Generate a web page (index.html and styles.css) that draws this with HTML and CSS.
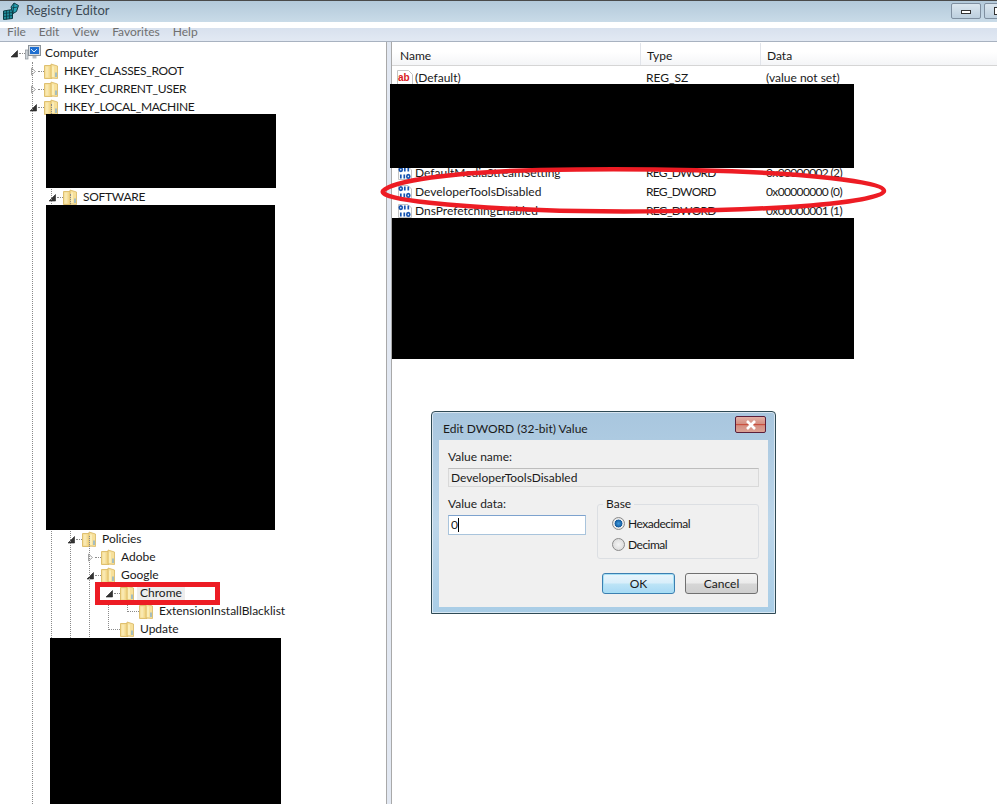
FILE: index.html
```html
<!DOCTYPE html>
<html lang="en">
<head>
<meta charset="utf-8">
<title>Registry Editor</title>
<link rel="stylesheet" href="styles.css">
</head>
<body>
<svg class="defs" width="0" height="0" aria-hidden="true">
  <symbol id="folder" viewBox="0 0 14 16">
    <path d="M0.500 2.500h7.500v13h-7.500z" fill="#f4da8e" stroke="#dfc070"/>
    <path d="M1.500 3.500h3v11h-3z" fill="#f9e8b0"/>
    <path d="M7 1l6.500 2v12.500L7 15z" fill="#f7e09a" stroke="#d8b660" stroke-width=".8"/>
    <path d="M9 3.500v10.500" stroke="#fbeeb9" stroke-width="2"/>
    <path d="M12 9.500v4.500" stroke="#6fa7d8" stroke-width="1.200"/>
  </symbol>
  <symbol id="arrow-open" viewBox="0 0 9 9">
    <path d="M1 8h6.500V1.500z" fill="#333" stroke="#222" stroke-width=".6"/>
  </symbol>
  <symbol id="arrow-closed" viewBox="0 0 9 9">
    <path d="M2.500 1v7l4-3.500z" fill="#fff" stroke="#a6a6a6" stroke-width="1"/>
  </symbol>
  <symbol id="bin" viewBox="0 0 16 16">
    <path d="M1.500 1.500h9.500l3.500 3.500v9.500h-13z" fill="#fff" stroke="#c4c4c4"/>
    <g fill="none" stroke="#1553b0" stroke-width="1.700">
      <ellipse cx="3.800" cy="4.600" rx="1.500" ry="1.700"/>
      <path d="M7.800 2.600v4M11.300 2.600v4M3.800 9.400v4M7.300 9.400v4"/>
      <ellipse cx="11.300" cy="11.400" rx="1.500" ry="1.700"/>
    </g>
  </symbol>
</svg>

<div class="window">
  <header class="titlebar">
    <svg class="app-icon" viewBox="0 0 18 18" width="18" height="18" aria-hidden="true">
      <path d="M1.500 9l9-1.500v9l-9 1z" fill="#1f8d9c" stroke="#0b3a44"/>
      <path d="M4.500 8.500v9M7.500 8v9M1.500 11.500l9-1M1.500 14.500l9-1" stroke="#0b3a44" stroke-width=".8"/>
      <path d="M9 5l3-4 4.500 2.500-2 6-3.500 2z" fill="#27a3b5" stroke="#0b3a44"/>
      <path d="M12 1.500l-1 10M9.500 6l6-1" stroke="#0b3a44" stroke-width=".8"/>
    </svg>
    <span class="title-text">Registry Editor</span>
    <div class="window-buttons">
      <div class="win-btn"><span class="min-glyph"></span></div>
      <div class="win-btn"><span class="max-glyph"></span></div>
    </div>
  </header>

  <nav class="menubar">
    <span>File</span><span>Edit</span><span>View</span><span>Favorites</span><span>Help</span>
  </nav>

  <div class="panes">
    <section class="tree">
      <div class="row l0">
        <svg class="exp"><use href="#arrow-open"/></svg><i class="dash"></i>
        <svg class="computer" viewBox="0 0 16 16" aria-hidden="true">
          <rect x="3.500" y="0.500" width="12" height="10" fill="#d8dde2" stroke="#8b9299"/>
          <rect x="5" y="2" width="9" height="7" fill="#1f6fd0"/>
          <path d="M6 4l3 3 3-3" stroke="#cfe6ff" stroke-width="1" fill="none"/>
          <path d="M7.500 11h4v2.500h-4z" fill="#b7bcc2"/>
          <rect x="0.500" y="5" width="2.500" height="9" fill="#cfd4d9" stroke="#8b9299" stroke-width=".7"/>
        </svg>
        <span class="label">Computer</span>
      </div>
      <div class="row l1"><svg class="exp"><use href="#arrow-closed"/></svg><i class="dash"></i><svg class="fld"><use href="#folder"/></svg><span class="label caps">HKEY_CLASSES_ROOT</span></div>
      <div class="row l1"><svg class="exp"><use href="#arrow-closed"/></svg><i class="dash"></i><svg class="fld"><use href="#folder"/></svg><span class="label caps">HKEY_CURRENT_USER</span></div>
      <div class="row l1"><svg class="exp"><use href="#arrow-open"/></svg><i class="dash"></i><svg class="fld"><use href="#folder"/></svg><span class="label caps">HKEY_LOCAL_MACHINE</span></div>
      <div class="gap-a"></div>
      <div class="row l2"><svg class="exp"><use href="#arrow-open"/></svg><i class="dash"></i><svg class="fld"><use href="#folder"/></svg><span class="label caps">SOFTWARE</span></div>
      <div class="gap-b"></div>
      <div class="row l3"><svg class="exp"><use href="#arrow-open"/></svg><i class="dash"></i><svg class="fld"><use href="#folder"/></svg><span class="label">Policies</span></div>
      <div class="row l4"><svg class="exp"><use href="#arrow-closed"/></svg><i class="dash"></i><svg class="fld"><use href="#folder"/></svg><span class="label">Adobe</span></div>
      <div class="row l4"><svg class="exp"><use href="#arrow-open"/></svg><i class="dash"></i><svg class="fld"><use href="#folder"/></svg><span class="label">Google</span></div>
      <div class="row l5"><svg class="exp"><use href="#arrow-open"/></svg><i class="dash"></i><svg class="fld"><use href="#folder"/></svg><span class="label selected">Chrome</span></div>
      <div class="row l6"><i class="blank"></i><i class="dash long"></i><svg class="fld"><use href="#folder"/></svg><span class="label">ExtensionInstallBlacklist</span></div>
      <div class="row l5"><i class="blank"></i><i class="dash long"></i><svg class="fld"><use href="#folder"/></svg><span class="label">Update</span></div>
      <i class="vline v2"></i><i class="vline v3"></i><i class="vline v4"></i><i class="vline v5"></i><i class="vline v6"></i><i class="vline v7"></i>
    </section>

    <div class="splitter"></div>

    <section class="list">
      <div class="list-head">
        <div class="col-name">Name</div>
        <div class="col-type">Type</div>
        <div class="col-data">Data</div>
      </div>
      <div class="list-row">
        <div class="col-name">
          <svg class="val-icon" viewBox="0 0 16 16" aria-hidden="true">
            <path d="M0.500 0.500h11l4 4v10h-15z" fill="#fff" stroke="#c4c4c4"/>
            <text x="1" y="10.500" class="ab-text">ab</text>
          </svg>(Default)</div>
        <div class="col-type">REG_SZ</div>
        <div class="col-data">(value not set)</div>
      </div>
      <div class="list-gap"></div>
      <div class="list-row">
        <div class="col-name"><svg class="val-icon"><use href="#bin"/></svg>DefaultMediaStreamSetting</div>
        <div class="col-type dw">REG_DWORD</div>
        <div class="col-data num">0x00000002 (2)</div>
      </div>
      <div class="list-row">
        <div class="col-name"><svg class="val-icon"><use href="#bin"/></svg>DeveloperToolsDisabled</div>
        <div class="col-type dw">REG_DWORD</div>
        <div class="col-data num">0x00000000 (0)</div>
      </div>
      <div class="list-row">
        <div class="col-name"><svg class="val-icon"><use href="#bin"/></svg>DnsPrefetchingEnabled</div>
        <div class="col-type dw">REG_DWORD</div>
        <div class="col-data num">0x00000001 (1)</div>
      </div>
    </section>
  </div>

  <div class="redact r1"></div>
  <div class="redact r2"></div>
  <div class="redact r3"></div>
  <div class="redact r4"></div>
  <div class="redact r5"></div>

  <div class="red-box"></div>
  <svg class="red-ellipse" viewBox="0 0 997 804" aria-hidden="true">
    <path d="M383 191C392 181 450 172 540 170C640 168 760 170 830 178C865 182 884 186 884 191C884 197 850 203 790 207C720 211 620 213 540 210C460 207 378 200 383 191Z" fill="none" stroke="#ed1c24" stroke-width="4.500"/>
  </svg>

  <div class="dialog">
    <div class="dialog-title">
      <span>Edit DWORD (32-bit) Value</span>
      <div class="close-btn"><svg viewBox="0 0 12 10" width="12" height="10" aria-hidden="true"><path d="M2 1l8 8M10 1L2 9" stroke="#fff" stroke-width="2.600"/></svg></div>
    </div>
    <div class="dialog-body">
      <div class="field-label">Value name:</div>
      <div class="readonly">DeveloperToolsDisabled</div>
      <div class="dialog-mid">
        <div class="data-col">
          <div class="field-label">Value data:</div>
          <div class="text-input"><span>0</span><i class="caret"></i></div>
        </div>
        <fieldset class="base">
          <legend>Base</legend>
          <div class="radio-row"><i class="radio checked"></i><span>Hexadecimal</span></div>
          <div class="radio-row"><i class="radio"></i><span>Decimal</span></div>
        </fieldset>
      </div>
      <div class="dialog-buttons">
        <div class="btn default">OK</div>
        <div class="btn">Cancel</div>
      </div>
    </div>
  </div>
</div>
</body>
</html>
```

FILE: styles.css
```css
* { box-sizing: border-box; }
html, body { margin: 0; padding: 0; background: #fff; }
body { width: 997px; height: 804px; overflow: hidden; font: 12px/16px Lato, "Liberation Sans", sans-serif; color: #1a1a1a; }
.defs { position: absolute; }
.ab-text { font: bold 10px "Liberation Sans", sans-serif; fill: #d8201c; }

.window { position: relative; width: 997px; height: 804px; display: flex; flex-direction: column; }

.titlebar { height: 22px; flex: none; display: flex; align-items: center; padding-left: 2px; padding-bottom: 2px; background: linear-gradient(#b3c9da, #c9dbe8); border-top: 1px solid #4a4a4a; }
.app-icon { flex: none; margin-right: 6px; }
.title-text { color: #3c4a55; font-size: 13px; margin-top: -1px; }
.window-buttons { margin-left: auto; display: flex; gap: 3px; align-self: flex-start; padding-top: 2px; margin-right: -17px; }
.win-btn { width: 30px; height: 16px; border: 1px solid #7f8fa0; border-radius: 2px; background: linear-gradient(#dbe6ef, #bccfde); display: flex; align-items: center; justify-content: center; }
.min-glyph { width: 10px; height: 4px; border: 1px solid #333; background: #fff; margin-top: 2px; }
.max-glyph { width: 10px; height: 8px; border: 1px solid #333; background: #fff; }

.menubar { height: 20px; flex: none; display: flex; gap: 13px; padding: 3px 0 0 7px; line-height: 13px; color: #6f6f6f; background: linear-gradient(#fff 0, #fff 6px, #d8e1ee 6px, #e2e9f3 100%); border-bottom: 1px solid #a8b2c0; }

.panes { flex: 1; display: flex; min-height: 0; }
.tree { position: relative; width: 387px; flex: none; padding-top: 2px; background: #fff; border-right: 1px solid #a9a9a9; }
.splitter { width: 4px; flex: none; background: #e2e8f2; }
.list { flex: 1; padding-top: 1px; background: #fff; border-left: 1px solid #a9a9a9; }

.row { height: 18px; display: flex; align-items: center; white-space: nowrap; }
.l0 { padding-left: 10px; }
.l1 { padding-left: 29px; }
.l2 { padding-left: 48px; }
.l3 { padding-left: 67px; }
.l4 { padding-left: 86px; }
.l5 { padding-left: 105px; }
.l6 { padding-left: 124px; }
.exp { display: block; width: 9px; height: 9px; flex: none; }
.blank { width: 3px; flex: none; }
.dash { width: 6px; height: 1px; flex: none; border-top: 1px dotted #8a8a8a; }
.dash.long { width: 12px; }
.fld { width: 14px; height: 16px; flex: none; margin-right: 3px; }
.computer { width: 16px; height: 16px; flex: none; margin-right: 1px; }
.label { padding: 0 3px 1px; line-height: 14px; }
.caps { letter-spacing: -.3px; }
.selected { background: #ededed; }
.gap-a { height: 72px; }
.gap-b { height: 324px; }

.vline { position: absolute; width: 1px; border-left: 1px dotted #8a8a8a; }
.v2 { left: 32px; top: 20px; height: 742px; }
.v3 { left: 51px; top: 62px; height: 700px; }
.v4 { left: 70px; top: 152px; height: 610px; }
.v5 { left: 89px; top: 494px; height: 101px; }
.v6 { left: 108px; top: 558px; height: 30px; }
.v7 { left: 127px; top: 558px; height: 12px; }

.list-head { height: 23px; display: flex; align-items: center; background: linear-gradient(#fff 40%, #f4f5f7); border-bottom: 1px solid #d5d5d5; }
.list-head .col-type, .list-head .col-data { align-self: stretch; display: flex; align-items: center; border-left: 1px solid #e1e4ea; }
.list-head .col-name, .list-head .col-type, .list-head .col-data { padding-top: 3px; }
.list-row { height: 19px; display: flex; align-items: center; white-space: nowrap; position: relative; top: 2px; }
.col-name { width: 248px; flex: none; padding-left: 8px; display: flex; align-items: center; }
.col-type { width: 120px; flex: none; padding-left: 6px; }
.col-data { flex: 1; padding-left: 6px; }
.dw { letter-spacing: -.7px; }
.num { letter-spacing: -.65px; }
.val-icon { width: 16px; height: 16px; flex: none; margin: 0 2px 0 -3px; }
.list-gap { height: 76px; }

.redact { position: absolute; background: #000; }
.r1 { left: 46px; top: 114px; width: 230px; height: 74px; }
.r2 { left: 46px; top: 205px; width: 229px; height: 325px; }
.r3 { left: 50px; top: 638px; width: 231px; height: 166px; }
.r4 { left: 390px; top: 84px; width: 464px; height: 84px; }
.r5 { left: 392px; top: 218px; width: 462px; height: 141px; }

.red-box { position: absolute; left: 95px; top: 582px; width: 125px; height: 23px; border: 5px solid #ed1c24; }
.red-ellipse { position: absolute; left: 0; top: 0; width: 997px; height: 804px; pointer-events: none; }

.dialog { position: absolute; left: 431px; top: 411px; width: 345px; height: 203px; display: flex; flex-direction: column; padding: 0 7px 6px 7px; background: linear-gradient(#a8c6de, #bcd6ea 55%, #a9cde6); border: 1px solid #2f4a55; border-radius: 4px 4px 0 0; box-shadow: inset 0 0 0 1px rgba(255,255,255,.55); }
.dialog-title { height: 28px; flex: none; display: flex; align-items: center; padding: 6px 2px 0 4px; color: #1a1a1a; }
.close-btn { margin-left: auto; width: 31px; height: 17px; margin-top: -9px; display: flex; align-items: center; justify-content: center; border: 1px solid #5a1f3a; border-radius: 2px; background: linear-gradient(#e3b0a6, #d48f82 45%, #c9503f 50%, #d48f82 58%, #dba295); }
.dialog-body { flex: 1; background: #f0f0f0; padding: 9px 9px 0 9px; display: flex; flex-direction: column; }
.field-label { line-height: 16px; color: #222; }
.readonly { height: 19px; margin-top: 3px; line-height: 17px; padding-left: 2px; border: 1px solid #d9d9d9; border-top-color: #bdbdbd; background: #eeeeee; }
.dialog-mid { display: flex; margin-top: 9px; }
.data-col { width: 138px; flex: none; }
.text-input { height: 20px; margin-top: 3px; display: flex; align-items: center; padding-left: 2px; background: #fff; border: 1px solid #a9c4dc; border-top-color: #7da2ce; }
.caret { width: 1px; height: 14px; background: #000; }
.base { margin: 0 0 0 11px; padding: 1px 0 0 14px; width: 162px; height: 63px; border: 1px solid #dcdfe3; border-radius: 3px; }
.base legend { padding: 0 3px; margin-left: -9px; line-height: 16px; }
.radio-row { height: 21px; display: flex; align-items: center; gap: 3px; letter-spacing: -.5px; }
.radio { width: 13px; height: 13px; border-radius: 50%; border: 1px solid #8a8a8a; background: radial-gradient(circle, #f4f4f4, #d4d4d4); display: block; flex: none; }
.radio.checked { background: radial-gradient(circle, #3f9ade 0, #145a9c 48%, #eeeeee 54%, #d4d4d4 100%); }
.dialog-buttons { margin-top: 14px; display: flex; justify-content: flex-end; gap: 10px; padding-right: 1px; }
.btn { width: 73px; height: 21px; display: flex; align-items: center; justify-content: center; border: 1px solid #707070; border-radius: 3px; background: linear-gradient(#f3f3f3 0, #ebebeb 48%, #d6d6d6 52%, #cfcfcf 100%); }
.btn.default { border-color: #3c7fb1; background: linear-gradient(#e9f5fc 0, #d8eefa 48%, #bde4f6 52%, #a7d9f5 100%); box-shadow: inset 0 0 0 1px #a6e0f5; }
```
